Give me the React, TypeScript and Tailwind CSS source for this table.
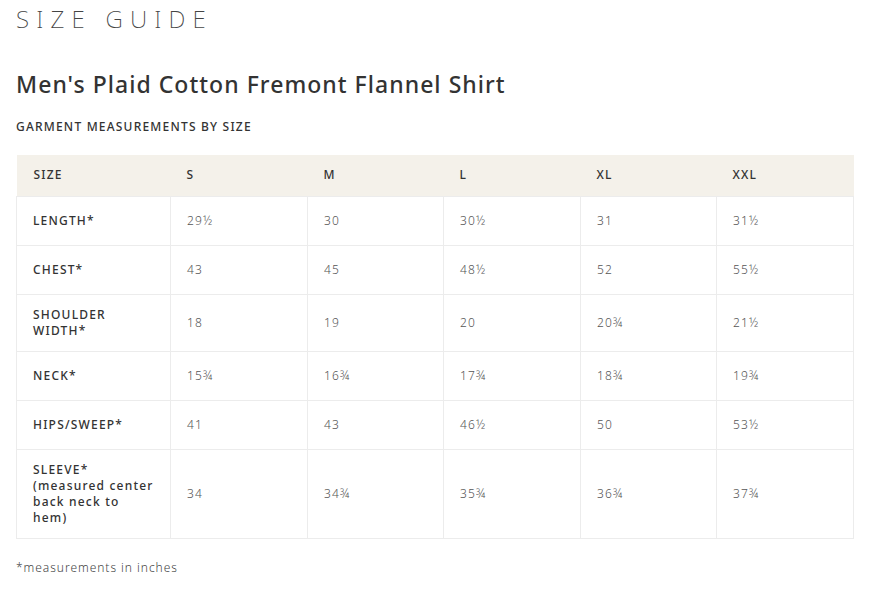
const sizes = ["S", "M", "L", "XL", "XXL"];

const rows: { label: string[]; values: string[]; h: string }[] = [
  { label: ["LENGTH*"], values: ["29½", "30", "30½", "31", "31½"], h: "h-[49px]" },
  { label: ["CHEST*"], values: ["43", "45", "48½", "52", "55½"], h: "h-[49px]" },
  { label: ["SHOULDER", "WIDTH*"], values: ["18", "19", "20", "20¾", "21½"], h: "h-[57px]" },
  { label: ["NECK*"], values: ["15¾", "16¾", "17¾", "18¾", "19¾"], h: "h-[49px]" },
  { label: ["HIPS/SWEEP*"], values: ["41", "43", "46½", "50", "53½"], h: "h-[49px]" },
  {
    label: ["SLEEVE*", "(measured center", "back neck to", "hem)"],
    values: ["34", "34¾", "35¾", "36¾", "37¾"],
    h: "h-[89px]",
  },
];

export default function App() {
  return (
    <div className="min-h-screen bg-white text-[#333] font-['Noto_Sans',sans-serif] px-4">
      <h1 className="pt-[7px] text-[24px] leading-[24px] font-extralight tracking-[0.3em] text-[#444]">
        SIZE GUIDE
      </h1>
      <h2 className="mt-[40px] text-[23px] leading-[26px] font-medium tracking-[0.045em] text-[#333]">
        Men's Plaid Cotton Fremont Flannel Shirt
      </h2>
      <p className="mt-[22px] text-[12px] leading-[16px] font-medium tracking-[0.1em] text-[#333]">
        GARMENT MEASUREMENTS BY SIZE
      </p>

      <table className="mt-[20px] w-[837px] border-collapse table-fixed">
        <colgroup>
          <col className="w-[154px]" />
          <col className="w-[137px]" />
          <col className="w-[136px]" />
          <col className="w-[137px]" />
          <col className="w-[136px]" />
          <col className="w-[137px]" />
        </colgroup>
        <thead>
          <tr className="h-[41px] bg-[#f4f1ea]">
            <th className="pl-[17px] text-left text-[12px] font-medium tracking-[0.1em]">SIZE</th>
            {sizes.map((s) => (
              <th key={s} className="pl-[16px] text-left text-[12px] font-medium tracking-[0.1em]">
                {s}
              </th>
            ))}
          </tr>
        </thead>
        <tbody>
          {rows.map((r) => (
            <tr key={r.label[0]} className={r.h}>
              <td className="border border-[#ececec] pl-[16px] text-[12px] leading-[16px] font-medium tracking-[0.1em] text-[#333]">
                {r.label.map((l, i) => (
                  <div key={i}>{l}</div>
                ))}
              </td>
              {r.values.map((v, i) => (
                <td
                  key={i}
                  className="border border-[#ececec] pl-[16px] text-[12px] font-light tracking-[0.1em] text-[#555]"
                >
                  {v}
                </td>
              ))}
            </tr>
          ))}
        </tbody>
      </table>

      <p className="mt-[20px] text-[12px] font-light tracking-[0.08em] text-[#444]">
        *measurements in inches
      </p>
    </div>
  );
}
